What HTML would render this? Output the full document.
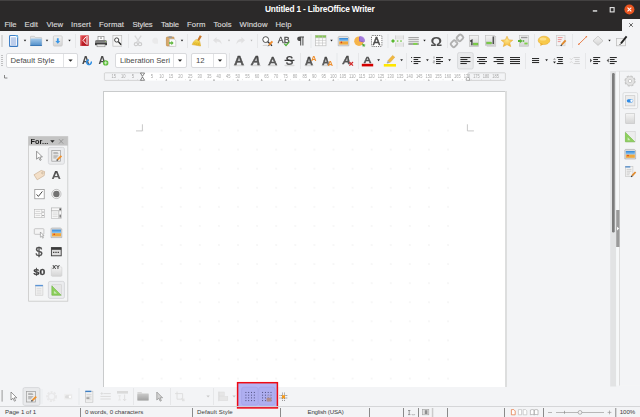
<!DOCTYPE html>
<html><head><meta charset="utf-8">
<style>
html,body{margin:0;padding:0;}
body{width:640px;height:417px;overflow:hidden;background:#f3f4f6;font-family:"Liberation Sans",sans-serif;position:relative;}
.abs{position:absolute;}
.t{position:absolute;white-space:nowrap;line-height:1;}
#dark{left:0;top:0;width:640px;height:30.5px;background:#2b2929;}
#closedoc{left:621.5px;top:18.5px;width:19px;height:13px;background:#f3f4f6;border-top-left-radius:1px;}
.menu{color:#d8d8d8;font-size:7.7px;top:21.4px;-webkit-text-stroke:0.15px #d8d8d8;}
#title{color:#fff;font-weight:bold;font-size:8.3px;letter-spacing:-0.18px;top:5.3px;left:265px;}
.combo{position:absolute;top:53px;height:13px;background:#fff;border:1px solid #d9dadd;border-radius:2px;}
.combo .sep{position:absolute;top:0;bottom:0;width:1px;background:#e2e3e5;}
.ct{color:#4a4a4a;font-size:7.75px;top:57px;}
.st{color:#3c3c3c;font-size:6.1px;top:409.3px;}
#pagesh{left:103.2px;top:91px;width:403.8px;height:295.6px;background:#dddede;}
#pageb{left:103.2px;top:91px;width:401.9px;height:295.6px;background:#c9cbcc;}
#page{left:104px;top:92px;width:401.1px;height:294.6px;background:#fff;}
#grid{left:132.95px;top:121.1px;width:324.7px;height:264.9px;background-image:radial-gradient(circle, #d2d2d2 0.35px, rgba(255,255,255,0) 0.75px);background-size:19.1px 19.08px;}
</style></head>
<body>
<div id="dark" class="abs"></div>
<div id="closedoc" class="abs"></div>
<div id="title" class="t">Untitled 1 - LibreOffice Writer</div>
<div class="t menu" style="left:4.5px;letter-spacing:-0.1px">File</div>
<div class="t menu" style="left:24.5px;letter-spacing:0.075px">Edit</div>
<div class="t menu" style="left:46.5px;letter-spacing:0px">View</div>
<div class="t menu" style="left:71px;letter-spacing:0.13px">Insert</div>
<div class="t menu" style="left:99px;letter-spacing:0.12px">Format</div>
<div class="t menu" style="left:132.5px;letter-spacing:-0.15px">Styles</div>
<div class="t menu" style="left:161px;letter-spacing:-0.07px">Table</div>
<div class="t menu" style="left:187px;letter-spacing:0.125px">Form</div>
<div class="t menu" style="left:213.5px;letter-spacing:0.01px">Tools</div>
<div class="t menu" style="left:239.5px;letter-spacing:0.12px">Window</div>
<div class="t menu" style="left:275.5px;letter-spacing:0.05px">Help</div>

<div class="combo" style="left:6px;width:70px"><div class="sep" style="left:56px"></div></div>
<div class="combo" style="left:115px;width:70px"><div class="sep" style="left:57px"></div></div>
<div class="combo" style="left:191px;width:34px"><div class="sep" style="left:21px"></div></div>
<div class="t ct" style="left:10.5px">Default Style</div>
<div class="t ct" style="left:120px">Liberation Seri</div>
<div class="t ct" style="left:196px">12</div>
<div id="pagesh" class="abs"></div><div id="pageb" class="abs"></div><div id="page" class="abs"></div>
<div id="grid" class="abs"></div>
<div class="t st" style="left:5px">Page 1 of 1</div>
<div class="t st" style="left:85px">0 words, 0 characters</div>
<div class="t st" style="left:197px;letter-spacing:0.1px">Default Style</div>
<div class="t st" style="left:307.5px;letter-spacing:-0.17px">English (USA)</div>
<div class="t st" style="left:619.7px">100%</div>
<svg class="abs" style="left:0;top:0;will-change:transform" width="640" height="417" viewBox="0 0 640 417">
<defs>
<linearGradient id="gPdf" x1="0" y1="0" x2="0.3" y2="1"><stop offset="0" stop-color="#e34a4e"/><stop offset="1" stop-color="#b4141e"/></linearGradient>
<linearGradient id="gFoldG" x1="0" y1="0" x2="0" y2="1"><stop offset="0" stop-color="#c8c8c8"/><stop offset="1" stop-color="#a0a0a0"/></linearGradient>
<radialGradient id="gStar" cx="0.5" cy="0.4" r="0.6"><stop offset="0" stop-color="#fde58c"/><stop offset="1" stop-color="#f4b530"/></radialGradient>
<linearGradient id="gA" x1="0" y1="0" x2="0" y2="1"><stop offset="0" stop-color="#3c3c3c"/><stop offset="1" stop-color="#6a6a6a"/></linearGradient>
<linearGradient id="gDoc" x1="0" y1="0" x2="1" y2="0.3"><stop offset="0" stop-color="#b4d0f0"/><stop offset="0.7" stop-color="#f4f8fd"/><stop offset="1" stop-color="#ffffff"/></linearGradient>
<linearGradient id="gFold" x1="0" y1="0" x2="0" y2="1"><stop offset="0" stop-color="#a3c9ea"/><stop offset="1" stop-color="#4c8bc8"/></linearGradient>
<linearGradient id="gGray" x1="0" y1="0" x2="0" y2="1"><stop offset="0" stop-color="#f4f4f4"/><stop offset="1" stop-color="#d4d4d4"/></linearGradient>
<linearGradient id="gYel" x1="0" y1="0" x2="0" y2="1"><stop offset="0" stop-color="#f8e46a"/><stop offset="1" stop-color="#e6b422"/></linearGradient>
<linearGradient id="gSky" x1="0" y1="0" x2="0" y2="1"><stop offset="0" stop-color="#2f86d8"/><stop offset="1" stop-color="#9fd0f5"/></linearGradient>
</defs>
<rect x="0" y="0" width="640" height="0.8" fill="#4a4848"/>
<rect x="592.8" y="10.2" width="4.4" height="1.5" fill="#dadada"/>
<rect x="610.2" y="7.6" width="3.9" height="4.3" fill="none" stroke="#e6e6e6" stroke-width="1.1"/>
<circle cx="629.4" cy="9.5" r="5" fill="#e9541f"/>
<path d="M627.5 7.6 L631.3 11.4 M631.3 7.6 L627.5 11.4" stroke="#fff" stroke-width="1.05"/>
<path d="M629.2 23.2 L632.8 26.8 M632.8 23.2 L629.2 26.8" stroke="#555" stroke-width="0.9"/>
<rect x="1.5" y="35.5" width="1" height="1" fill="#8d8d8d"/>
<rect x="1.5" y="37.5" width="1" height="1" fill="#8d8d8d"/>
<rect x="1.5" y="39.5" width="1" height="1" fill="#8d8d8d"/>
<rect x="1.5" y="41.5" width="1" height="1" fill="#8d8d8d"/>
<rect x="1.5" y="43.5" width="1" height="1" fill="#8d8d8d"/>
<rect x="1.5" y="45.5" width="1" height="1" fill="#8d8d8d"/>
<g transform="translate(9,35)" ><rect x="0.55" y="0.55" width="8.1" height="10.8" rx="0.9" fill="#fff" stroke="#3f80c8" stroke-width="1.1"/><rect x="1.8" y="2.3" width="5.4" height="8.1" rx="0.6" fill="#bccdeb"/><path d="M6.2 0.6 H8.2 Q8.7 0.6 8.7 1.1 V3.2 Z" fill="#8fd0f6"/><rect x="0" y="10.9" width="9.2" height="0.7" fill="#2a68b0" opacity="0.6"/></g>
<path d="M23.75 39.75 H26.25 L25 41.45 Z" fill="#1e1e1e"/>
<g transform="translate(30,36)" ><path d="M0.5 0.6 Q0.5 0.3 0.9 0.3 H4.4 L5.4 1.6 H11.3 Q11.7 1.6 11.7 2 V9.6 H0.5 Z" fill="#e6e6e6" stroke="#bcbcbc" stroke-width="0.6"/><rect x="0.4" y="2.6" width="11.4" height="7.3" rx="0.5" fill="url(#gFold)"/><rect x="0.4" y="9.1" width="11.4" height="0.8" fill="#3572b0"/></g>
<path d="M45.75 39.75 H48.25 L47 41.45 Z" fill="#1e1e1e"/>
<g transform="translate(53,35.5)" ><rect x="0.4" y="0.4" width="8.8" height="10.2" rx="1" fill="url(#gGray)" stroke="#c4c4c4" stroke-width="0.7"/><path d="M3.9 2.8 H5.7 V5.6 H7.2 L4.8 8.3 L2.4 5.6 H3.9 Z" fill="#3896e6"/></g>
<path d="M68.25 39.75 H70.75 L69.5 41.45 Z" fill="#1e1e1e"/>
<rect x="75.0" y="34" width="1" height="14" fill="#e6e7e9"/>
<g transform="translate(80,35)" ><rect x="0.3" y="0.3" width="8.4" height="10.6" fill="url(#gPdf)"/><rect x="0.3" y="0.3" width="1.2" height="10.6" fill="#f08a8a" opacity="0.55"/><path d="M7 1 V9.8" fill="none" stroke="#fff" stroke-width="1.1"/><path d="M6 1.8 L3 5.4 L6 8.8" fill="none" stroke="#fff" stroke-width="1"/></g>
<g transform="translate(95,36)" ><rect x="3" y="0.3" width="6" height="4" fill="#fff" stroke="#777" stroke-width="0.6"/><path d="M1.6 4 H10.4 Q12 4 12 6 V9 H0 V6 Q0 4 1.6 4 Z" fill="#7e7e7e"/><rect x="0" y="7" width="12" height="2.2" fill="#3e3e3e"/><rect x="2" y="8.2" width="8" height="2.6" fill="#e8e8e8" stroke="#777" stroke-width="0.5"/><rect x="5" y="1.6" width="2" height="0.9" fill="#7a7a7a"/><circle cx="10.4" cy="5.6" r="0.5" fill="#9fd96a"/></g>
<g transform="translate(112.5,35)" ><rect x="0.4" y="0.4" width="8.8" height="10.8" fill="#f6f6f6" stroke="#bdbdbd" stroke-width="0.7"/><circle cx="4.2" cy="5" r="2.1" fill="#fff" stroke="#333" stroke-width="0.9"/><path d="M5.8 6.6 L8.6 9.8" stroke="#222" stroke-width="1.3"/></g>
<rect x="128.0" y="34" width="1" height="14" fill="#e6e7e9"/>
<g transform="translate(134,35.6)" ><path d="M0.8 0 L5.4 6.8 M7.2 0 L2.6 6.8" stroke="#d9d9da" stroke-width="1.3" fill="none"/><ellipse cx="2" cy="8.6" rx="1.7" ry="1.5" fill="none" stroke="#cdcdce" stroke-width="1.2"/><ellipse cx="6" cy="8.6" rx="1.7" ry="1.5" fill="none" stroke="#cdcdce" stroke-width="1.2"/></g>
<g transform="translate(151.6,37.4)" ><path d="M2.6 0.4 H5 L6.4 1.8 V6.4 H2.6 Q0.6 5.4 0.6 3.4 Q0.6 1.4 2.6 0.4 Z" fill="#e9e9ea" opacity="0.9"/></g>
<g transform="translate(166,36)" ><rect x="0.4" y="1" width="7.6" height="9" rx="0.8" fill="#d8a868" stroke="#b58442" stroke-width="0.6"/><rect x="2.4" y="0.2" width="3.6" height="1.8" rx="0.6" fill="#9a9a9a"/><path d="M3.4 3 H8.2 L9.8 4.6 V10.4 H3.4 Z" fill="#fafafa" stroke="#b9b9b9" stroke-width="0.6"/><path d="M3 6.2 H5.4 V4.8 L7.6 7 L5.4 9.2 V7.8 H3 Z" fill="#5cb63a"/></g>
<path d="M180.75 39.75 H183.25 L182 41.45 Z" fill="#1e1e1e"/>
<rect x="187.0" y="34" width="1" height="14" fill="#e6e7e9"/>
<g transform="translate(192,35)" ><path d="M7.8 0.2 L9.8 1.2 L6.8 6.4 L5 5.4 Z" fill="#c9782a"/><path d="M4.2 4.4 L7.8 6.4 L8.6 11 L0.2 9.6 Q1.2 6.2 4.2 4.4 Z" fill="url(#gYel)" stroke="#d9a520" stroke-width="0.5"/><path d="M2.4 9 L3.6 6.8 M4.4 9.6 L5.2 7.4 M6.4 10 L6.6 8" stroke="#caa21c" stroke-width="0.4"/></g>
<rect x="208.0" y="34" width="1" height="14" fill="#e6e7e9"/>
<g transform="translate(213,37)" ><path d="M0 3.2 L3.6 0 V2 Q8.6 2 8.6 7.6 Q7.4 4.4 3.6 4.4 V6.4 Z" fill="#e1e1e2"/></g>
<path d="M228.0 39.75 H230.0 L229 41.45 Z" fill="#b8b8b8"/>
<g transform="translate(236,37)" ><path d="M9 3.2 L5.4 0 V2 Q0.4 2 0.4 7.6 Q1.6 4.4 5.4 4.4 V6.4 Z" fill="#e1e1e2"/></g>
<path d="M250.5 39.75 H252.5 L251.5 41.45 Z" fill="#b8b8b8"/>
<rect x="257.0" y="34" width="1" height="14" fill="#e6e7e9"/>
<g transform="translate(262,36)" ><ellipse cx="3.6" cy="9.4" rx="3.2" ry="0.6" fill="#d4d4d4"/><circle cx="3.7" cy="3.6" r="2.9" fill="#fff" stroke="#3e3e3e" stroke-width="0.9"/><path d="M5.8 5.8 L10 9.8" stroke="#2a2a2a" stroke-width="1.2"/><path d="M10.4 5.4 L7 9.2" stroke="#ee8a2c" stroke-width="1.8"/><path d="M7 9.2 L6.2 10.2" stroke="#333" stroke-width="1"/></g>
<text x="277.8" y="43.2" font-family="Liberation Sans" font-size="9.4" font-weight="normal" font-style="normal" fill="#4a4a4a" stroke="#4e4e4e" stroke-width="0.3" stroke-linejoin="round" textLength="11.8" lengthAdjust="spacingAndGlyphs">AB</text>
<path d="M284.2 43.6 L286 45.6 L289.2 41.8" fill="none" stroke="#4caf34" stroke-width="1.3"/>
<g transform="translate(297,36.5)" ><path d="M3.2 0 H7 V0.9 H6.4 V9 H5.4 V0.9 H4.2 V9 H3.2 V4.6 Q0.2 4.6 0.2 2.3 Q0.2 0 3.2 0 Z" fill="#4a4a4a"/></g>
<rect x="310.5" y="34" width="1" height="14" fill="#e6e7e9"/>
<g transform="translate(315,35)" ><rect x="0.4" y="0.4" width="10.6" height="10.4" fill="#fdfdfd" stroke="#b5b5b5" stroke-width="0.6"/><rect x="0.4" y="0.4" width="10.6" height="2.4" fill="#86c556"/><path d="M0.4 2.8 H11 M0.4 5.4 H11 M0.4 8 H11 M3.9 0.4 V10.8 M7.5 0.4 V10.8" stroke="#bdbdbd" stroke-width="0.55" fill="none"/></g>
<path d="M330.25 39.75 H332.75 L331.5 41.45 Z" fill="#1e1e1e"/>
<g transform="translate(338,36)" ><path d="M0.8 0.4 H9.4 L10.8 1.4 V9.8 H0.2 V1.2 Z" fill="#e2e2e2" stroke="#9b9b9b" stroke-width="0.5"/><rect x="1.2" y="2" width="8.8" height="3.6" fill="url(#gSky)"/><rect x="1.2" y="5.4" width="8.8" height="3.2" fill="#f0a83c"/><circle cx="3.4" cy="6.4" r="0.8" fill="#d9361e"/></g>
<g transform="translate(354,36)" ><circle cx="5" cy="5.2" r="4.8" fill="#f6b44a"/><path d="M5 5.2 L5 0.4 A4.8 4.8 0 0 1 9.6 6.6 Z" fill="#8d5fc9"/><path d="M5.6 4.6 L6 0 A5 5 0 0 1 11 6 Z" fill="#a47be0" opacity="0.9"/><path d="M8 7.4 L11.8 9 L10.4 9.6 L11.2 11 L9.6 10 L9 11.2 Z" fill="#4aa834"/></g>
<g transform="translate(371,35)" ><rect x="0.5" y="0.5" width="10.4" height="11" rx="1" fill="#fff" stroke="#555" stroke-width="0.8" stroke-dasharray="1.2 1"/></g>
<text x="372.8" y="45" font-family="Liberation Sans" font-size="10.6" font-weight="normal" font-style="normal" fill="#4a4a4a" stroke="#4e4e4e" stroke-width="0.45" stroke-linejoin="round" textLength="7.4" lengthAdjust="spacingAndGlyphs">A</text>
<rect x="387.5" y="34" width="1" height="14" fill="#e6e7e9"/>
<g transform="translate(391,35)" ><rect x="4.3" y="0.4" width="8.4" height="4" fill="#e7e7e7"/><rect x="4.3" y="7.6" width="8.4" height="4.2" fill="#e7e7e7"/><path d="M4.5 0.4 V4.4 M12.5 0.4 V4.4 M4.5 7.6 V11.8 M12.5 7.6 V11.8" stroke="#c6c6c6" stroke-width="0.6"/><path d="M0 6 L2 3.9 L4 6 L2 8 Z" fill="#58b82e"/><rect x="5.8" y="5.3" width="1.6" height="1.5" fill="#7ccc50"/><rect x="9.2" y="5.3" width="1.6" height="1.5" fill="#7ccc50"/></g>
<g transform="translate(408.4,37)" ><rect x="0" y="0" width="10.4" height="8" fill="#ececec"/><rect x="0" y="0" width="10.4" height="1.1" fill="#a4a4a4"/><rect x="0" y="2" width="10.4" height="1" fill="#b0b0b0"/><rect x="0" y="3.9" width="10.4" height="1" fill="#b0b0b0"/><rect x="0" y="5.8" width="10.4" height="2.2" fill="#a6a6a6"/><rect x="4.8" y="6" width="4.2" height="1.8" fill="#7ed348"/></g>
<path d="M423.25 39.75 H425.75 L424.5 41.45 Z" fill="#1e1e1e"/>
<text x="430.6" y="46" font-family="Liberation Sans" font-size="12.4" font-weight="bold" font-style="normal" fill="#4f4f4f"  textLength="11.6" lengthAdjust="spacingAndGlyphs">Ω</text>
<rect x="447.0" y="34" width="1" height="14" fill="#e6e7e9"/>
<g transform="translate(451,35)" ><g transform="rotate(-45 6 5.8)" fill="none" stroke="#b0b0b0" stroke-width="1.9"><rect x="-1.2" y="3.2" width="6" height="5.2" rx="1.6"/><rect x="7.2" y="3.2" width="6" height="5.2" rx="1.6"/><path d="M3.6 5.8 H8.4" stroke="#bdbdbd" stroke-width="1.6"/></g></g>
<g transform="translate(469,35)" ><rect x="0.5" y="0.5" width="9" height="11" fill="url(#gGray)" stroke="#c0c0c0" stroke-width="0.7"/><path d="M1.2 6.4 L2.9 5.2 V10.2" stroke="#3a3a3a" stroke-width="1.3" fill="none"/><rect x="4.2" y="8" width="4.8" height="2.1" fill="#7fd04a" stroke="#5a9a3a" stroke-width="0.3"/></g>
<g transform="translate(485,35)" ><rect x="2" y="1.6" width="8.8" height="9.6" fill="#e4e4e4" stroke="#bdbdbd" stroke-width="0.5"/><rect x="0.4" y="0.4" width="8.8" height="9.8" fill="url(#gGray)" stroke="#bdbdbd" stroke-width="0.6"/><rect x="1.6" y="7" width="5" height="2" fill="#7fd04a" stroke="#5a9a3a" stroke-width="0.3"/><path d="M8.2 1.6 V9" stroke="#222" stroke-width="1.1"/></g>
<g transform="translate(501,36)" ><path d="M6 0.2 L7.7 3.8 L11.8 4.2 L8.7 6.8 L9.7 10.6 L6 8.6 L2.3 10.6 L3.3 6.8 L0.2 4.2 L4.3 3.8 Z" fill="url(#gStar)" stroke="#e3a52a" stroke-width="0.5"/></g>
<g transform="translate(518,35)" ><rect x="1.6" y="0.4" width="9" height="10.8" fill="url(#gGray)" stroke="#bdbdbd" stroke-width="0.6"/><rect x="3" y="1.8" width="6.4" height="1.4" fill="#9a9a9a"/><rect x="6.4" y="7.6" width="3.2" height="1.8" fill="#7fd04a"/><path d="M0 5 H2.2 V3.8 L4.4 6 L2.2 8.2 V7 H0 Z" fill="#55b432"/><rect x="4.6" y="5.2" width="1.6" height="1.6" fill="#55b432"/></g>
<rect x="534.0" y="34" width="1" height="14" fill="#e6e7e9"/>
<g transform="translate(538,36)" ><ellipse cx="6" cy="4.4" rx="5.8" ry="4.2" fill="#f8c94a" stroke="#e2a422" stroke-width="0.5"/><path d="M2.6 7 L2.4 10 L5.4 8.2 Z" fill="#eeb030"/><ellipse cx="5" cy="3" rx="3.4" ry="1.6" fill="#fde59a" opacity="0.8"/></g>
<g transform="translate(556,35)" ><rect x="0.4" y="0.4" width="8.6" height="10.4" fill="#f3f3f3" stroke="#c6c6c6" stroke-width="0.6"/><path d="M1.8 2.6 H6.6 M1.8 4.6 H5.6 M1.8 6.6 H4.6" stroke="#e77c7c" stroke-width="0.8"/><path d="M9.6 5.4 L5.8 9.6" stroke="#e08a2e" stroke-width="1.9"/><path d="M5.8 9.6 L4.8 10.8" stroke="#333" stroke-width="1.2"/></g>
<rect x="572.0" y="34" width="1" height="14" fill="#e6e7e9"/>
<path d="M578.8 44.2 L586.4 36.8" stroke="#e8743a" stroke-width="0.9"/><circle cx="578.8" cy="44.2" r="0.8" fill="#e8743a"/><circle cx="586.4" cy="36.8" r="0.8" fill="#e8743a"/>
<g transform="translate(593,36)" ><path d="M5 0.2 L10 4.8 L5 9.4 L0 4.8 Z" fill="url(#gGray)" stroke="#bcbcbc" stroke-width="0.7"/></g>
<path d="M608.25 39.75 H610.75 L609.5 41.45 Z" fill="#1e1e1e"/>
<g transform="translate(616,36)" ><rect x="0.4" y="2.6" width="9" height="7.2" fill="#f3f3f3" stroke="#b9b9b9" stroke-width="0.7"/><path d="M10.6 0.4 L5 7.4" stroke="#222" stroke-width="1.8"/><path d="M5 7.4 L3.6 9 " stroke="#222" stroke-width="0.8"/></g>
<rect x="1.5" y="55.0" width="1" height="1" fill="#8d8d8d"/>
<rect x="1.5" y="57.0" width="1" height="1" fill="#8d8d8d"/>
<rect x="1.5" y="59.0" width="1" height="1" fill="#8d8d8d"/>
<rect x="1.5" y="61.0" width="1" height="1" fill="#8d8d8d"/>
<rect x="1.5" y="63.0" width="1" height="1" fill="#8d8d8d"/>
<rect x="1.5" y="65.0" width="1" height="1" fill="#8d8d8d"/>
<path d="M68.3 59.4 H72.7 L70.5 61.8 Z" fill="#2a2a2a"/>
<path d="M177.8 59.4 H182.2 L180 61.8 Z" fill="#2a2a2a"/>
<path d="M217.8 59.4 H222.2 L220 61.8 Z" fill="#2a2a2a"/>
<text x="82" y="64.3" font-family="Liberation Sans" font-size="11.6" font-weight="bold" font-style="normal" fill="#4a4a4a"  textLength="7.4" lengthAdjust="spacingAndGlyphs">A</text>
<path d="M91.2 61.6 A2.3 2.3 0 1 1 89 60" fill="none" stroke="#2f8fe4" stroke-width="1.5"/>
<text x="98.4" y="64.3" font-family="Liberation Sans" font-size="11.6" font-weight="bold" font-style="normal" fill="#4a4a4a"  textLength="7.4" lengthAdjust="spacingAndGlyphs">A</text>
<circle cx="105.7" cy="62.9" r="2.7" fill="#5abd38"/><path d="M104.1 62.9 H107.3 M105.7 61.3 V64.5" stroke="#e2f6d8" stroke-width="0.9"/>
<rect x="229.0" y="53" width="1" height="16" fill="#e6e7e9"/>
<ellipse cx="239.0" cy="65.4" rx="5.6" ry="0.9" fill="#cfcfcf" opacity="0.8"/>
<text x="234" y="65" font-family="Liberation Sans" font-size="12.4" font-weight="bold" font-style="normal" fill="url(#gA)" stroke="#4e4e4e" stroke-width="0.35" stroke-linejoin="round" textLength="10" lengthAdjust="spacingAndGlyphs">A</text>
<ellipse cx="256.0" cy="65.4" rx="5.1" ry="0.9" fill="#cfcfcf" opacity="0.8"/>
<text x="251" y="65" font-family="Liberation Sans" font-size="12.4" font-weight="bold" font-style="italic" fill="url(#gA)" stroke="#4e4e4e" stroke-width="0.35" stroke-linejoin="round" textLength="9.4" lengthAdjust="spacingAndGlyphs">A</text>
<ellipse cx="272.5" cy="65.4" rx="5.1" ry="0.9" fill="#cfcfcf" opacity="0.8"/>
<text x="268.4" y="64.6" font-family="Liberation Sans" font-size="11.4" font-weight="normal" font-style="normal" fill="url(#gA)" stroke="#4e4e4e" stroke-width="0.5" stroke-linejoin="round" textLength="8.4" lengthAdjust="spacingAndGlyphs">A</text>
<ellipse cx="289.5" cy="65.4" rx="5.1" ry="0.9" fill="#cfcfcf" opacity="0.8"/>
<text x="285.6" y="65" font-family="Liberation Sans" font-size="12" font-weight="bold" font-style="normal" fill="url(#gA)"  textLength="8" lengthAdjust="spacingAndGlyphs">S</text>
<rect x="284.6" y="59.8" width="9.8" height="1.1" fill="#2e2e2e"/>
<rect x="300.0" y="53" width="1" height="16" fill="#e6e7e9"/>
<ellipse cx="309.0" cy="65.4" rx="4.6" ry="0.9" fill="#cfcfcf" opacity="0.8"/>
<text x="305" y="65" font-family="Liberation Sans" font-size="11" font-weight="bold" font-style="normal" fill="url(#gA)" stroke="#4e4e4e" stroke-width="0.3" stroke-linejoin="round" textLength="8" lengthAdjust="spacingAndGlyphs">A</text>
<text x="311" y="60.6" font-family="Liberation Sans" font-size="7.6" font-weight="bold" font-style="normal" fill="#ee8f2e"  >A</text>
<ellipse cx="326.0" cy="65.4" rx="4.6" ry="0.9" fill="#cfcfcf" opacity="0.8"/>
<text x="322" y="64.6" font-family="Liberation Sans" font-size="11" font-weight="bold" font-style="normal" fill="url(#gA)" stroke="#4e4e4e" stroke-width="0.3" stroke-linejoin="round" textLength="7.6" lengthAdjust="spacingAndGlyphs">A</text>
<text x="327.4" y="66.2" font-family="Liberation Sans" font-size="7.6" font-weight="bold" font-style="normal" fill="#ee8f2e"  >A</text>
<rect x="336.5" y="53" width="1" height="16" fill="#e6e7e9"/>
<text x="342.6" y="64.4" font-family="Liberation Sans" font-size="11" font-weight="bold" font-style="italic" fill="url(#gA)" stroke="#4e4e4e" stroke-width="0.3" stroke-linejoin="round" textLength="8" lengthAdjust="spacingAndGlyphs">A</text>
<path d="M349.4 62 L353 65.6 M353 62 L349.4 65.6" stroke="#d22b2b" stroke-width="1.2"/>
<rect x="358.0" y="53" width="1" height="16" fill="#e6e7e9"/>
<text x="363.4" y="63.2" font-family="Liberation Sans" font-size="9.8" font-weight="bold" font-style="normal" fill="url(#gA)" stroke="#4e4e4e" stroke-width="0.3" stroke-linejoin="round" textLength="8" lengthAdjust="spacingAndGlyphs">A</text>
<rect x="361.8" y="63.8" width="11.4" height="2.6" fill="#d40000"/>
<path d="M377.25 59.349999999999994 H379.95000000000005 L378.6 61.25 Z" fill="#262626"/>
<rect x="383.8" y="64" width="12.2" height="2.6" fill="#ffe600"/>
<g transform="translate(385,55)" ><path d="M7.6 0.4 L9.8 2.2 L5 7.6 L2.8 5.8 Z" fill="#f0b840" stroke="#d89a20" stroke-width="0.4"/><path d="M2.8 5.8 L5 7.6 L2.6 8.4 L1.6 8 Z" fill="#a9a9a9"/></g>
<path d="M400.25 59.349999999999994 H402.95000000000005 L401.6 61.25 Z" fill="#262626"/>
<rect x="406.0" y="53" width="1" height="16" fill="#e6e7e9"/>
<rect x="413.6" y="57" width="7" height="1.05" fill="#2c2c2c"/><rect x="413.6" y="59" width="4.6" height="1.05" fill="#2c2c2c"/><rect x="413.6" y="61" width="7" height="1.05" fill="#2c2c2c"/><rect x="413.6" y="63" width="4.6" height="1.05" fill="#2c2c2c"/><rect x="411" y="57" width="1.1" height="1.05" fill="#444"/><rect x="411" y="61" width="1.1" height="1.05" fill="#444"/>
<path d="M426.04999999999995 59.349999999999994 H428.75 L427.4 61.25 Z" fill="#262626"/>
<rect x="436" y="57" width="7" height="1.05" fill="#2c2c2c"/><rect x="436" y="59" width="4.6" height="1.05" fill="#2c2c2c"/><rect x="436" y="61" width="7" height="1.05" fill="#2c2c2c"/><rect x="436" y="63" width="4.6" height="1.05" fill="#2c2c2c"/>
<rect x="433.6" y="56.4" width="0.8" height="2.2" fill="#8a8a8a"/><path d="M433.2 60.8 H434.6 V61.8 H433.2 V62.9 H434.8" fill="none" stroke="#8a8a8a" stroke-width="0.6"/>
<path d="M448.25 59.349999999999994 H450.95000000000005 L449.6 61.25 Z" fill="#262626"/>
<rect x="457.6" y="52.6" width="15.6" height="16.4" rx="1.6" fill="#e9eaec" stroke="#cfd0d3" stroke-width="0.7"/>
<rect x="460.4" y="57" width="10" height="1.05" fill="#2c2c2c"/><rect x="460.4" y="59" width="7" height="1.05" fill="#2c2c2c"/><rect x="460.4" y="61" width="10" height="1.05" fill="#2c2c2c"/><rect x="460.4" y="63" width="6.4" height="1.05" fill="#2c2c2c"/>
<rect x="477.0" y="57" width="10" height="1.05" fill="#2c2c2c"/><rect x="478.8" y="59" width="6.4" height="1.05" fill="#2c2c2c"/><rect x="477.0" y="61" width="10" height="1.05" fill="#2c2c2c"/><rect x="478.8" y="63" width="6.4" height="1.05" fill="#2c2c2c"/>
<rect x="493.6" y="57" width="10" height="1.05" fill="#2c2c2c"/><rect x="496.6" y="59" width="7" height="1.05" fill="#2c2c2c"/><rect x="493.6" y="61" width="10" height="1.05" fill="#2c2c2c"/><rect x="497.20000000000005" y="63" width="6.4" height="1.05" fill="#2c2c2c"/>
<rect x="510" y="57" width="10" height="1.05" fill="#2c2c2c"/><rect x="510" y="59" width="10" height="1.05" fill="#2c2c2c"/><rect x="510" y="61" width="10" height="1.05" fill="#2c2c2c"/><rect x="510" y="63" width="10" height="1.05" fill="#2c2c2c"/>
<rect x="525.0" y="53" width="1" height="16" fill="#e6e7e9"/>
<rect x="532" y="58" width="7.1" height="1.05" fill="#2c2c2c"/><rect x="532" y="60" width="7.1" height="1.05" fill="#2c2c2c"/><rect x="532" y="62" width="7.1" height="1.05" fill="#2c2c2c"/>
<path d="M545.25 59.349999999999994 H547.95 L546.6 61.25 Z" fill="#262626"/>
<rect x="556.8" y="57" width="6.2" height="1.05" fill="#2c2c2c"/><rect x="558.1" y="59" width="4.6" height="1.05" fill="#2c2c2c"/><rect x="558.1" y="61" width="4.6" height="1.05" fill="#2c2c2c"/><rect x="556.8" y="63" width="6.4" height="1.05" fill="#2c2c2c"/>
<path d="M553.1 59.8 L554.5 58 L555.9 59.8 Z" fill="#9a9a9a"/><path d="M553.1 61.6 L554.5 63.4 L555.9 61.6 Z" fill="#2c2c2c"/>
<rect x="573.6" y="57" width="6.2" height="1.05" fill="#d2d2d3"/><rect x="574.9000000000001" y="59" width="4.6" height="1.05" fill="#d2d2d3"/><rect x="574.9000000000001" y="61" width="4.6" height="1.05" fill="#d2d2d3"/><rect x="573.6" y="63" width="6.4" height="1.05" fill="#d2d2d3"/>
<path d="M569.9000000000001 58.2 L571.3000000000001 59.8 L572.7 58.2 M569.9000000000001 63 L571.3000000000001 61.4 L572.7 63" fill="none" stroke="#d2d2d3" stroke-width="0.7"/>
<rect x="585.0" y="53" width="1" height="16" fill="#e6e7e9"/>
<rect x="593.2" y="57" width="7" height="1.05" fill="#2c2c2c"/><rect x="593.2" y="59" width="4.8" height="1.05" fill="#2c2c2c"/><rect x="593.2" y="61" width="7" height="1.05" fill="#2c2c2c"/><rect x="593.2" y="63" width="4.8" height="1.05" fill="#2c2c2c"/>
<path d="M590 58.6 L592.2 60.5 L590 62.4 Z" fill="#5a5a5a"/>
<rect x="609.8000000000001" y="57" width="7" height="1.05" fill="#2c2c2c"/><rect x="609.8000000000001" y="59" width="4.8" height="1.05" fill="#2c2c2c"/><rect x="609.8000000000001" y="61" width="7" height="1.05" fill="#2c2c2c"/><rect x="609.8000000000001" y="63" width="4.8" height="1.05" fill="#2c2c2c"/>
<path d="M608.8000000000001 58.6 L606.6 60.5 L608.8000000000001 62.4 Z" fill="#5a5a5a"/>
<rect x="142" y="72.6" width="326" height="8" fill="#fff"/>
<rect x="104.4" y="72.8" width="37.8" height="7.6" rx="0.8" fill="#f3f4f6" stroke="#c6c6c6" stroke-width="0.7"/>
<rect x="468" y="72.8" width="37.4" height="7.6" rx="0.8" fill="#f3f4f6" stroke="#c6c6c6" stroke-width="0.7"/>
<text x="111.52" y="78" font-family="Liberation Sans" font-size="5.7" fill="#a8a8a8" textLength="4.5" lengthAdjust="spacingAndGlyphs">15</text>
<text x="121.06" y="78" font-family="Liberation Sans" font-size="5.7" fill="#a8a8a8" textLength="4.5" lengthAdjust="spacingAndGlyphs">10</text>
<text x="131.66" y="78" font-family="Liberation Sans" font-size="5.7" fill="#a8a8a8" textLength="2.4" lengthAdjust="spacingAndGlyphs">5</text>
<text x="150.75" y="78" font-family="Liberation Sans" font-size="5.7" fill="#a8a8a8" textLength="2.4" lengthAdjust="spacingAndGlyphs">5</text>
<text x="159.24" y="78" font-family="Liberation Sans" font-size="5.7" fill="#a8a8a8" textLength="4.5" lengthAdjust="spacingAndGlyphs">10</text>
<text x="168.78" y="78" font-family="Liberation Sans" font-size="5.7" fill="#a8a8a8" textLength="4.5" lengthAdjust="spacingAndGlyphs">15</text>
<text x="178.33" y="78" font-family="Liberation Sans" font-size="5.7" fill="#a8a8a8" textLength="4.5" lengthAdjust="spacingAndGlyphs">20</text>
<text x="187.88" y="78" font-family="Liberation Sans" font-size="5.7" fill="#a8a8a8" textLength="4.5" lengthAdjust="spacingAndGlyphs">25</text>
<text x="197.42" y="78" font-family="Liberation Sans" font-size="5.7" fill="#a8a8a8" textLength="4.5" lengthAdjust="spacingAndGlyphs">30</text>
<text x="206.97" y="78" font-family="Liberation Sans" font-size="5.7" fill="#a8a8a8" textLength="4.5" lengthAdjust="spacingAndGlyphs">35</text>
<text x="216.51" y="78" font-family="Liberation Sans" font-size="5.7" fill="#a8a8a8" textLength="4.5" lengthAdjust="spacingAndGlyphs">40</text>
<text x="226.06" y="78" font-family="Liberation Sans" font-size="5.7" fill="#a8a8a8" textLength="4.5" lengthAdjust="spacingAndGlyphs">45</text>
<text x="235.60" y="78" font-family="Liberation Sans" font-size="5.7" fill="#a8a8a8" textLength="4.5" lengthAdjust="spacingAndGlyphs">50</text>
<text x="245.15" y="78" font-family="Liberation Sans" font-size="5.7" fill="#a8a8a8" textLength="4.5" lengthAdjust="spacingAndGlyphs">55</text>
<text x="254.69" y="78" font-family="Liberation Sans" font-size="5.7" fill="#a8a8a8" textLength="4.5" lengthAdjust="spacingAndGlyphs">60</text>
<text x="264.24" y="78" font-family="Liberation Sans" font-size="5.7" fill="#a8a8a8" textLength="4.5" lengthAdjust="spacingAndGlyphs">65</text>
<text x="273.78" y="78" font-family="Liberation Sans" font-size="5.7" fill="#a8a8a8" textLength="4.5" lengthAdjust="spacingAndGlyphs">70</text>
<text x="283.33" y="78" font-family="Liberation Sans" font-size="5.7" fill="#a8a8a8" textLength="4.5" lengthAdjust="spacingAndGlyphs">75</text>
<text x="292.87" y="78" font-family="Liberation Sans" font-size="5.7" fill="#a8a8a8" textLength="4.5" lengthAdjust="spacingAndGlyphs">80</text>
<text x="302.42" y="78" font-family="Liberation Sans" font-size="5.7" fill="#a8a8a8" textLength="4.5" lengthAdjust="spacingAndGlyphs">85</text>
<text x="311.96" y="78" font-family="Liberation Sans" font-size="5.7" fill="#a8a8a8" textLength="4.5" lengthAdjust="spacingAndGlyphs">90</text>
<text x="321.50" y="78" font-family="Liberation Sans" font-size="5.7" fill="#a8a8a8" textLength="4.5" lengthAdjust="spacingAndGlyphs">95</text>
<text x="330.00" y="78" font-family="Liberation Sans" font-size="5.7" fill="#a8a8a8" textLength="6.6" lengthAdjust="spacingAndGlyphs">100</text>
<text x="339.55" y="78" font-family="Liberation Sans" font-size="5.7" fill="#a8a8a8" textLength="6.6" lengthAdjust="spacingAndGlyphs">105</text>
<text x="349.09" y="78" font-family="Liberation Sans" font-size="5.7" fill="#a8a8a8" textLength="6.6" lengthAdjust="spacingAndGlyphs">110</text>
<text x="358.63" y="78" font-family="Liberation Sans" font-size="5.7" fill="#a8a8a8" textLength="6.6" lengthAdjust="spacingAndGlyphs">115</text>
<text x="368.18" y="78" font-family="Liberation Sans" font-size="5.7" fill="#a8a8a8" textLength="6.6" lengthAdjust="spacingAndGlyphs">120</text>
<text x="377.72" y="78" font-family="Liberation Sans" font-size="5.7" fill="#a8a8a8" textLength="6.6" lengthAdjust="spacingAndGlyphs">125</text>
<text x="387.27" y="78" font-family="Liberation Sans" font-size="5.7" fill="#a8a8a8" textLength="6.6" lengthAdjust="spacingAndGlyphs">130</text>
<text x="396.81" y="78" font-family="Liberation Sans" font-size="5.7" fill="#a8a8a8" textLength="6.6" lengthAdjust="spacingAndGlyphs">135</text>
<text x="406.36" y="78" font-family="Liberation Sans" font-size="5.7" fill="#a8a8a8" textLength="6.6" lengthAdjust="spacingAndGlyphs">140</text>
<text x="415.91" y="78" font-family="Liberation Sans" font-size="5.7" fill="#a8a8a8" textLength="6.6" lengthAdjust="spacingAndGlyphs">145</text>
<text x="425.45" y="78" font-family="Liberation Sans" font-size="5.7" fill="#a8a8a8" textLength="6.6" lengthAdjust="spacingAndGlyphs">150</text>
<text x="434.99" y="78" font-family="Liberation Sans" font-size="5.7" fill="#a8a8a8" textLength="6.6" lengthAdjust="spacingAndGlyphs">155</text>
<text x="444.54" y="78" font-family="Liberation Sans" font-size="5.7" fill="#a8a8a8" textLength="6.6" lengthAdjust="spacingAndGlyphs">160</text>
<text x="454.08" y="78" font-family="Liberation Sans" font-size="5.7" fill="#a8a8a8" textLength="6.6" lengthAdjust="spacingAndGlyphs">165</text>
<text x="463.63" y="78" font-family="Liberation Sans" font-size="5.7" fill="#a8a8a8" textLength="6.6" lengthAdjust="spacingAndGlyphs">170</text>
<text x="473.18" y="78" font-family="Liberation Sans" font-size="5.7" fill="#a8a8a8" textLength="6.6" lengthAdjust="spacingAndGlyphs">175</text>
<text x="482.72" y="78" font-family="Liberation Sans" font-size="5.7" fill="#a8a8a8" textLength="6.6" lengthAdjust="spacingAndGlyphs">180</text>
<text x="492.27" y="78" font-family="Liberation Sans" font-size="5.7" fill="#a8a8a8" textLength="6.6" lengthAdjust="spacingAndGlyphs">185</text>
<rect x="118.24" y="79.4" width="0.6" height="0.7" fill="#c4c4c4"/><rect x="127.78" y="79.4" width="0.6" height="0.7" fill="#c4c4c4"/><rect x="137.33" y="79.4" width="0.6" height="0.7" fill="#c4c4c4"/><rect x="156.42" y="79.4" width="0.6" height="0.7" fill="#c4c4c4"/><rect x="165.96" y="79.4" width="0.6" height="0.7" fill="#c4c4c4"/><rect x="175.51" y="79.4" width="0.6" height="0.7" fill="#c4c4c4"/><rect x="185.05" y="79.4" width="0.6" height="0.7" fill="#c4c4c4"/><rect x="194.60" y="79.4" width="0.6" height="0.7" fill="#c4c4c4"/><rect x="204.14" y="79.4" width="0.6" height="0.7" fill="#c4c4c4"/><rect x="213.69" y="79.4" width="0.6" height="0.7" fill="#c4c4c4"/><rect x="223.23" y="79.4" width="0.6" height="0.7" fill="#c4c4c4"/><rect x="232.78" y="79.4" width="0.6" height="0.7" fill="#c4c4c4"/><rect x="242.32" y="79.4" width="0.6" height="0.7" fill="#c4c4c4"/><rect x="251.87" y="79.4" width="0.6" height="0.7" fill="#c4c4c4"/><rect x="261.41" y="79.4" width="0.6" height="0.7" fill="#c4c4c4"/><rect x="270.96" y="79.4" width="0.6" height="0.7" fill="#c4c4c4"/><rect x="280.50" y="79.4" width="0.6" height="0.7" fill="#c4c4c4"/><rect x="290.05" y="79.4" width="0.6" height="0.7" fill="#c4c4c4"/><rect x="299.59" y="79.4" width="0.6" height="0.7" fill="#c4c4c4"/><rect x="309.14" y="79.4" width="0.6" height="0.7" fill="#c4c4c4"/><rect x="318.68" y="79.4" width="0.6" height="0.7" fill="#c4c4c4"/><rect x="328.23" y="79.4" width="0.6" height="0.7" fill="#c4c4c4"/><rect x="337.77" y="79.4" width="0.6" height="0.7" fill="#c4c4c4"/><rect x="347.32" y="79.4" width="0.6" height="0.7" fill="#c4c4c4"/><rect x="356.86" y="79.4" width="0.6" height="0.7" fill="#c4c4c4"/><rect x="366.41" y="79.4" width="0.6" height="0.7" fill="#c4c4c4"/><rect x="375.95" y="79.4" width="0.6" height="0.7" fill="#c4c4c4"/><rect x="385.50" y="79.4" width="0.6" height="0.7" fill="#c4c4c4"/><rect x="395.04" y="79.4" width="0.6" height="0.7" fill="#c4c4c4"/><rect x="404.59" y="79.4" width="0.6" height="0.7" fill="#c4c4c4"/><rect x="414.13" y="79.4" width="0.6" height="0.7" fill="#c4c4c4"/><rect x="423.68" y="79.4" width="0.6" height="0.7" fill="#c4c4c4"/><rect x="433.22" y="79.4" width="0.6" height="0.7" fill="#c4c4c4"/><rect x="442.77" y="79.4" width="0.6" height="0.7" fill="#c4c4c4"/><rect x="452.31" y="79.4" width="0.6" height="0.7" fill="#c4c4c4"/><rect x="461.86" y="79.4" width="0.6" height="0.7" fill="#c4c4c4"/><rect x="471.40" y="79.4" width="0.6" height="0.7" fill="#c4c4c4"/><rect x="480.95" y="79.4" width="0.6" height="0.7" fill="#c4c4c4"/><rect x="490.49" y="79.4" width="0.6" height="0.7" fill="#c4c4c4"/><rect x="500.04" y="79.4" width="0.6" height="0.7" fill="#c4c4c4"/>
<path d="M165.26 80.6 L166.26 79.2 L167.26 80.6 Z" fill="#7a7a7a"/><path d="M189.12 80.6 L190.12 79.2 L191.12 80.6 Z" fill="#7a7a7a"/><path d="M212.99 80.6 L213.99 79.2 L214.99 80.6 Z" fill="#7a7a7a"/><path d="M236.85 80.6 L237.85 79.2 L238.85 80.6 Z" fill="#7a7a7a"/><path d="M260.71 80.6 L261.71 79.2 L262.71 80.6 Z" fill="#7a7a7a"/><path d="M284.58 80.6 L285.58 79.2 L286.58 80.6 Z" fill="#7a7a7a"/><path d="M308.44 80.6 L309.44 79.2 L310.44 80.6 Z" fill="#7a7a7a"/><path d="M332.30 80.6 L333.30 79.2 L334.30 80.6 Z" fill="#7a7a7a"/><path d="M356.16 80.6 L357.16 79.2 L358.16 80.6 Z" fill="#7a7a7a"/><path d="M380.02 80.6 L381.02 79.2 L382.02 80.6 Z" fill="#7a7a7a"/><path d="M403.89 80.6 L404.89 79.2 L405.89 80.6 Z" fill="#7a7a7a"/><path d="M427.75 80.6 L428.75 79.2 L429.75 80.6 Z" fill="#7a7a7a"/><path d="M451.61 80.6 L452.61 79.2 L453.61 80.6 Z" fill="#7a7a7a"/>
<path d="M140.4 73 H144.6 L142.5 76.3 Z M140.4 80.3 H144.6 L142.5 77 Z" fill="#fff" stroke="#555" stroke-width="0.7"/>
<path d="M466.2 80.3 H469.6 V78.6 L467.9 77 L466.2 78.6 Z" fill="#fff" stroke="#777" stroke-width="0.6"/>
<path d="M4.5 75 V78 H7.4" fill="none" stroke="#6a6a6a" stroke-width="0.8"/>
<path d="M136 130.9 H142.4 V124.3" fill="none" stroke="#c2c2c2" stroke-width="0.9"/>
<path d="M473.9 130.9 H467.4 V124.3" fill="none" stroke="#c2c2c2" stroke-width="0.9"/>
<rect x="610.2" y="71" width="6" height="315.5" fill="#e2e3e4"/>
<rect x="612" y="73" width="2.7" height="159.5" rx="1.2" fill="#7c7c7c"/>
<rect x="616.2" y="71" width="24" height="314.5" fill="#f7f8f9"/>
<rect x="619" y="71" width="0.8" height="314.5" fill="#cfcfcf"/>
<rect x="616.2" y="210" width="3.5" height="37" fill="#9a9a9a"/>
<path d="M617 226.8 L619.2 228.6 L617 230.4 Z" fill="#fff"/>
<rect x="619.8" y="71" width="20.2" height="314.5" fill="#f3f4f6"/>
<rect x="616.2" y="70.8" width="23.8" height="0.7" fill="#dcdddf"/>
<g transform="translate(624,75)" ><circle cx="6" cy="6" r="5" fill="none" stroke="#c4c4c4" stroke-width="1.2" stroke-dasharray="2.3 1.6"/><circle cx="6" cy="6" r="4.5" fill="#e3e3e3" stroke="#bdbdbd" stroke-width="0.6"/><circle cx="6" cy="6" r="1.7" fill="#fff" stroke="#b4b4b4" stroke-width="0.6"/></g>
<rect x="623" y="92.6" width="14.6" height="16" rx="1.4" fill="#f5f6f7" stroke="#d3d4d6" stroke-width="0.7"/>
<g transform="translate(625,95.4)" ><rect x="0.3" y="0.3" width="9.6" height="10.2" fill="#ececec" stroke="#c4c4c4" stroke-width="0.6"/><rect x="1.8" y="3.8" width="6.4" height="3.2" rx="1.6" fill="#2f8be6"/><circle cx="6.6" cy="5.4" r="1.3" fill="#fff"/></g>
<g transform="translate(625.4,113.4)" ><rect x="0.3" y="0.3" width="9" height="9.8" fill="url(#gGray)" stroke="#c4c4c4" stroke-width="0.6"/></g>
<g transform="translate(625,131)" ><rect x="0.8" y="0.3" width="9.4" height="10.6" fill="#ededed" stroke="#cfcfcf" stroke-width="0.6"/><path d="M0.4 1.4 L9.8 10.8 H0.4 Z" fill="#8ed15c" stroke="#66b03a" stroke-width="0.5"/><path d="M2.4 5.8 L6 9.4 H2.4 Z" fill="#d4f0c0" stroke="#6cb640" stroke-width="0.3"/></g>
<g transform="translate(624.6,149)" ><path d="M0.8 0.4 H9.6 L11 1.4 V10 H0.2 V1.2 Z" fill="#dcdcdc" stroke="#9b9b9b" stroke-width="0.5"/><rect x="1.2" y="2" width="9" height="3.8" fill="url(#gSky)"/><rect x="1.2" y="5.6" width="9" height="3.2" fill="#f0a83c"/><circle cx="3.4" cy="6.6" r="0.8" fill="#d9361e"/></g>
<g transform="translate(625,166)" ><rect x="0.3" y="0.6" width="7.6" height="10" fill="#f3f3f3" stroke="#c2c2c2" stroke-width="0.6"/><rect x="0.3" y="0.3" width="5" height="1.2" fill="#3d7fc6"/><path d="M1.6 3.4 H6.4 M1.6 5.2 H6.4 M1.6 7 H5 M1.6 8.8 H4.4" stroke="#b4b4b4" stroke-width="0.6"/><path d="M10.6 6 L7.2 9.6" stroke="#e08a2e" stroke-width="1.8"/><path d="M7.2 9.6 L6.2 10.8" stroke="#333" stroke-width="1.1"/></g>
<rect x="28.6" y="136.6" width="39.2" height="164.6" fill="#f4f5f6" stroke="#c9c9c9" stroke-width="0.8"/>
<rect x="28.4" y="136.6" width="39.4" height="9" fill="#c3c3c3"/>
<text x="30.6" y="144.2" font-family="Liberation Sans" font-size="7.4" font-weight="bold" font-style="normal" fill="#1e1e1e"  >For...</text>
<path d="M50.2 140.2 H54.6 L52.4 142.8 Z" fill="#222"/>
<path d="M59 139.2 L63.2 143.6 M63.2 139.2 L59 143.6" stroke="#8a8a8a" stroke-width="0.8"/>
<g transform="translate(36.2,150.8)" ><path d="M0.4 0.4 V8.4 L2.4 6.6 L3.8 9.6 L5 9 L3.6 6.2 H6.2 Z" fill="#fff" stroke="#6e6e6e" stroke-width="0.7"/></g>
<rect x="48.4" y="147.4" width="16" height="16.8" rx="1.6" fill="#ebecee" stroke="#cfd0d3" stroke-width="0.7"/>
<g transform="translate(51.4,150.2)" ><rect x="0.4" y="0.4" width="8.8" height="10.6" fill="#ececec" stroke="#9c9c9c" stroke-width="0.7"/><path d="M2 2.4 H6.4 M2 3.5 H7 M2 5.6 H7 M2 6.7 H6 M2 7.8 H5" stroke="#8a8a8a" stroke-width="0.6"/><path d="M10 5.6 L6.2 9.4" stroke="#f0922e" stroke-width="1.9"/><path d="M6.2 9.4 L5.3 10.3" stroke="#222" stroke-width="1.3"/></g>
<g transform="translate(33.6,169.4)" ><path d="M0.4 5.4 L7.6 1 L11 2.2 L10.6 6.2 L3.6 10.4 Z" fill="#f3dfc8" stroke="#c4a888" stroke-width="0.6"/><circle cx="8.8" cy="3.6" r="0.8" fill="#fff" stroke="#9a7a50" stroke-width="0.4"/></g>
<text x="51.4" y="178.6" font-family="Liberation Sans" font-size="11.6" font-weight="bold" font-style="normal" fill="url(#gA)"  textLength="9.4" lengthAdjust="spacingAndGlyphs">A</text>
<g transform="translate(34.4,189)" ><rect x="0.4" y="0.4" width="9.4" height="9.4" fill="#fff" stroke="#8a8a8a" stroke-width="0.7"/><path d="M2.2 5.4 L4 7.4 L8 2.4" fill="none" stroke="#333" stroke-width="0.9"/></g>
<g transform="translate(51.4,189)" ><circle cx="5" cy="5" r="4.6" fill="#fafafa" stroke="#a8a8a8" stroke-width="0.7"/><circle cx="5" cy="5" r="3.2" fill="#727272"/></g>
<g transform="translate(34.2,209)" ><rect x="0.3" y="0.3" width="10" height="8.4" fill="#f8f8f8" stroke="#b8b8b8" stroke-width="0.6"/><path d="M7.4 0.3 V8.7 M0.3 4.5 H7.4" stroke="#b8b8b8" stroke-width="0.5"/><path d="M1.4 2.4 H6 M1.4 6.4 H6" stroke="#c8c8c8" stroke-width="0.7"/><circle cx="8.8" cy="3" r="0.5" fill="#333"/><circle cx="8.8" cy="6.4" r="0.5" fill="#333"/></g>
<g transform="translate(51.2,207.6)" ><rect x="0.3" y="0.3" width="10" height="3" fill="#f8f8f8" stroke="#a8a8a8" stroke-width="0.6"/><rect x="0.3" y="3.3" width="7.4" height="7.4" fill="#f8f8f8" stroke="#b8b8b8" stroke-width="0.6"/><path d="M1.4 5.4 H6.4 M1.4 7.2 H6.4 M1.4 9 H6.4" stroke="#c8c8c8" stroke-width="0.6"/><rect x="7.7" y="3.3" width="2.6" height="7.4" fill="#f8f8f8" stroke="#b8b8b8" stroke-width="0.6"/><rect x="8.2" y="0.8" width="1.6" height="1.8" fill="#555"/><rect x="8.3" y="7" width="1.4" height="3" fill="#777"/></g>
<g transform="translate(34,228.4)" ><rect x="0.3" y="0.3" width="9.6" height="5.6" rx="0.8" fill="#f4f4f4" stroke="#a9a9a9" stroke-width="0.6"/><path d="M6.4 3.6 V8.8 L7.6 7.8 L8.6 9.8 L9.4 9.4 L8.4 7.4 H10 Z" fill="#fff" stroke="#777" stroke-width="0.5"/></g>
<g transform="translate(50.8,227.6)" ><path d="M0.8 0.4 H9.6 L11 1.4 V10 H0.2 V1.2 Z" fill="#dcdcdc" stroke="#9b9b9b" stroke-width="0.5"/><rect x="1.2" y="2" width="9" height="3.8" fill="url(#gSky)"/><rect x="1.2" y="5.6" width="9" height="3.2" fill="#f0a83c"/><circle cx="3.4" cy="6.6" r="0.8" fill="#d9361e"/></g>
<text x="35.6" y="256.2" font-family="Liberation Sans" font-size="12.4" font-weight="normal" font-style="normal" fill="#4a4a4a" stroke="#4e4e4e" stroke-width="0.35" stroke-linejoin="round" >$</text>
<g transform="translate(51,247.2)" ><rect x="0.4" y="0.4" width="9.8" height="8.2" fill="#dedede" stroke="#3a3a3a" stroke-width="0.9"/><rect x="0.4" y="0.4" width="9.8" height="2.2" fill="#3a3a3a"/><path d="M2 5.2 H8.6" stroke="#444" stroke-width="1.3" stroke-dasharray="1.4 0.9"/></g>
<text x="33.6" y="274.6" font-family="Liberation Sans" font-size="9.8" font-weight="bold" font-style="normal" fill="#3a3a3a" stroke="#4e4e4e" stroke-width="0.35" stroke-linejoin="round" textLength="11.6" lengthAdjust="spacingAndGlyphs">$0</text>
<g transform="translate(51,266.6)" ><rect x="0.3" y="0.3" width="10.6" height="9.4" rx="1" fill="url(#gGray)" stroke="#cdcdcd" stroke-width="0.6"/></g>
<text x="52.2" y="269" font-family="Liberation Sans" font-size="5.4" font-weight="bold" font-style="normal" fill="#333"  textLength="7.8" lengthAdjust="spacingAndGlyphs">XY</text>
<g transform="translate(35,284.6)" ><rect x="0.3" y="0.6" width="7.6" height="10" fill="#f3f3f3" stroke="#c8c8c8" stroke-width="0.6"/><rect x="0.3" y="0.3" width="7.6" height="1.4" fill="#5a94d6"/><path d="M1.6 3.8 H6.4 M1.6 5.6 H6.4 M1.6 7.4 H6.4 M1.6 9.2 H6.4" stroke="#cdcdcd" stroke-width="0.6"/></g>
<rect x="48.4" y="281.4" width="16" height="17" rx="1.6" fill="#ebecee" stroke="#cfd0d3" stroke-width="0.7"/>
<g transform="translate(51.4,284.4)" ><rect x="0.8" y="0.3" width="9.4" height="10.6" fill="#e6e6e6" stroke="#cfcfcf" stroke-width="0.6"/><path d="M0.4 1.4 L9.8 10.8 H0.4 Z" fill="#8ed15c" stroke="#66b03a" stroke-width="0.5"/><path d="M2.4 5.8 L6 9.4 H2.4 Z" fill="#d4f0c0" stroke="#6cb640" stroke-width="0.3"/></g>
<rect x="1.6" y="390" width="1" height="11.6" fill="#9a9a9a"/>
<g transform="translate(10.6,391.6)" ><path d="M0.4 0.4 V8.4 L2.4 6.6 L3.8 9.6 L5 9 L3.6 6.2 H6.2 Z" fill="#fff" stroke="#6e6e6e" stroke-width="0.7"/></g>
<rect x="23" y="387.6" width="17" height="17.8" rx="1.8" fill="#e9eaec" stroke="#cfd0d3" stroke-width="0.7"/>
<g transform="translate(26.2,391)" ><rect x="0.4" y="0.4" width="8.8" height="10.6" fill="#ececec" stroke="#9c9c9c" stroke-width="0.7"/><path d="M2 2.4 H6.4 M2 3.5 H7 M2 5.6 H7 M2 6.7 H6 M2 7.8 H5" stroke="#8a8a8a" stroke-width="0.6"/><path d="M10 5.6 L6.2 9.4" stroke="#f0922e" stroke-width="1.9"/><path d="M6.2 9.4 L5.3 10.3" stroke="#222" stroke-width="1.3"/></g>
<rect x="41.5" y="389" width="1" height="15" fill="#eaebed"/>
<g transform="translate(46,391)" ><circle cx="5.6" cy="5.6" r="4.4" fill="none" stroke="#e8e8e9" stroke-width="2" stroke-dasharray="2 1.2"/><circle cx="5.6" cy="5.6" r="3.2" fill="none" stroke="#e9e9ea" stroke-width="1.4"/></g>
<g transform="translate(64,393.6)" ><rect x="0.3" y="0.3" width="8" height="5.6" fill="#ededed"/><rect x="1" y="1.6" width="6.6" height="3" rx="1.5" fill="#dcdcdc"/><circle cx="6" cy="3.1" r="1.3" fill="#fff"/></g>
<rect x="78.5" y="388" width="1" height="17" fill="#e6e7e9"/>
<g transform="translate(85,390.4)" ><rect x="0.3" y="0.8" width="7.6" height="11" fill="#f3f3f3" stroke="#bdbdbd" stroke-width="0.6"/><rect x="0.3" y="0.3" width="6" height="1.4" fill="#3d7fc6"/><path d="M1.4 4 H6.6 M1.4 5.8 H6.6 M1.4 7.6 H6.6 M1.4 9.4 H6.6" stroke="#c4c4c4" stroke-width="0.6"/><rect x="1.4" y="7.2" width="3" height="0.9" fill="#666"/></g>
<g transform="translate(100.4,392)" ><path d="M3 1.6 H10.4 M0 4.4 H10.4 M0 7 H10.4" stroke="#dcdcdc" stroke-width="1"/><path d="M1.4 0 V3 M0 1.5 H2.8" stroke="#d8d8d8" stroke-width="0.7"/></g>
<g transform="translate(117,391)" ><rect x="0" y="0" width="11" height="2.6" fill="#dadada"/><path d="M2.6 4.4 V9 M1.2 4.8 H4 M1.2 9 H4 " stroke="#e2e2e2" stroke-width="0.7"/><path d="M7.6 3.6 V9.4 M6 8 L7.6 9.8 L9.2 8" stroke="#dadada" stroke-width="0.8" fill="none"/></g>
<rect x="133.0" y="388" width="1" height="17" fill="#e6e7e9"/>
<g transform="translate(137,391.2)" ><path d="M0.4 0.8 H4.4 L5.4 2 H11.6 V9.4 H0.4 Z" fill="#d6d6d6"/><rect x="0.4" y="2.8" width="11.2" height="6.6" rx="0.6" fill="url(#gFoldG)"/></g>
<g transform="translate(156.4,391.6)" ><path d="M0.4 0.4 V8.4 L2.4 6.6 L3.8 9.6 L5 9 L3.6 6.2 H6.2 Z" fill="#d2d2d2" stroke="#8e8e8e" stroke-width="0.7"/></g>
<rect x="170.0" y="388" width="1" height="17" fill="#e6e7e9"/>
<g transform="translate(175,391.6)" ><path d="M2 0 V7.6 H9.6 M0 2 H7.6 V9.6" fill="none" stroke="#dcdcdc" stroke-width="0.9"/><path d="M6.4 6.6 L9.4 9.4" stroke="#e0e0e0" stroke-width="1.2"/></g>
<path d="M206.4 395.4 H209.8 L208.1 397.4 Z" fill="#c8c8c8"/>
<rect x="213.0" y="388" width="1" height="17" fill="#e6e7e9"/>
<g transform="translate(218,391.6)" ><rect x="0.3" y="0" width="0.9" height="9.6" fill="#d8d8d8"/><rect x="1.2" y="0.4" width="5" height="4" fill="#e6e6e6" stroke="#dadada" stroke-width="0.5"/><rect x="1.2" y="5" width="8.6" height="4" fill="#e6e6e6" stroke="#dadada" stroke-width="0.5"/></g>
<path d="M232.4 395.4 H235.8 L234.1 397.4 Z" fill="#c8c8c8"/>
<rect x="237.6" y="382.7" width="39.8" height="25.2" fill="#b4b4f4" stroke="#ee0a14" stroke-width="1.5"/>
<rect x="241.6" y="387.2" width="16.4" height="17.8" rx="2.2" fill="#aeaef0" stroke="#a3a3e6" stroke-width="0.7"/>
<rect x="258.6" y="387.2" width="16.4" height="17.8" rx="2.2" fill="#aeaef0" stroke="#a3a3e6" stroke-width="0.7"/>
<rect x="245.45" y="391.95" width="0.9" height="0.9" fill="#3b3b66"/><rect x="245.45" y="394.70" width="0.9" height="0.9" fill="#3b3b66"/><rect x="245.45" y="397.45" width="0.9" height="0.9" fill="#3b3b66"/><rect x="245.45" y="400.20" width="0.9" height="0.9" fill="#3b3b66"/><rect x="248.25" y="391.95" width="0.9" height="0.9" fill="#3b3b66"/><rect x="248.25" y="394.70" width="0.9" height="0.9" fill="#3b3b66"/><rect x="248.25" y="397.45" width="0.9" height="0.9" fill="#3b3b66"/><rect x="248.25" y="400.20" width="0.9" height="0.9" fill="#3b3b66"/><rect x="251.05" y="391.95" width="0.9" height="0.9" fill="#3b3b66"/><rect x="251.05" y="394.70" width="0.9" height="0.9" fill="#3b3b66"/><rect x="251.05" y="397.45" width="0.9" height="0.9" fill="#3b3b66"/><rect x="251.05" y="400.20" width="0.9" height="0.9" fill="#3b3b66"/><rect x="253.85" y="391.95" width="0.9" height="0.9" fill="#3b3b66"/><rect x="253.85" y="394.70" width="0.9" height="0.9" fill="#3b3b66"/><rect x="253.85" y="397.45" width="0.9" height="0.9" fill="#3b3b66"/><rect x="253.85" y="400.20" width="0.9" height="0.9" fill="#3b3b66"/>
<rect x="262.15" y="391.95" width="0.9" height="0.9" fill="#3b3b66"/><rect x="262.15" y="394.70" width="0.9" height="0.9" fill="#3b3b66"/><rect x="262.15" y="397.45" width="0.9" height="0.9" fill="#3b3b66"/><rect x="262.15" y="400.20" width="0.9" height="0.9" fill="#3b3b66"/><rect x="264.95" y="391.95" width="0.9" height="0.9" fill="#3b3b66"/><rect x="264.95" y="394.70" width="0.9" height="0.9" fill="#3b3b66"/><rect x="264.95" y="397.45" width="0.9" height="0.9" fill="#3b3b66"/><rect x="264.95" y="400.20" width="0.9" height="0.9" fill="#3b3b66"/><rect x="267.75" y="391.95" width="0.9" height="0.9" fill="#3b3b66"/><rect x="267.75" y="394.70" width="0.9" height="0.9" fill="#3b3b66"/><rect x="267.75" y="397.45" width="0.9" height="0.9" fill="#3b3b66"/><rect x="267.75" y="400.20" width="0.9" height="0.9" fill="#3b3b66"/><rect x="270.55" y="391.95" width="0.9" height="0.9" fill="#3b3b66"/><rect x="270.55" y="394.70" width="0.9" height="0.9" fill="#3b3b66"/><rect x="270.55" y="397.45" width="0.9" height="0.9" fill="#3b3b66"/><rect x="270.55" y="400.20" width="0.9" height="0.9" fill="#3b3b66"/>
<rect x="266.6" y="397.8" width="4.8" height="3.8" rx="0.5" fill="#b08c8c"/><path d="M267.6 397.8 V396.6 A1.4 1.4 0 0 1 270.4 396.6 V397.8" fill="none" stroke="#a9a2c8" stroke-width="0.8"/>
<rect x="279.60" y="395.0" width="0.8" height="0.8" fill="#555"/><rect x="279.60" y="397.6" width="0.8" height="0.8" fill="#555"/><rect x="281.30" y="395.0" width="0.8" height="0.8" fill="#555"/><rect x="281.30" y="397.6" width="0.8" height="0.8" fill="#555"/><rect x="284.70" y="395.0" width="0.8" height="0.8" fill="#555"/><rect x="284.70" y="397.6" width="0.8" height="0.8" fill="#555"/><rect x="286.40" y="395.0" width="0.8" height="0.8" fill="#555"/><rect x="286.40" y="397.6" width="0.8" height="0.8" fill="#555"/><rect x="282.0" y="392.70" width="0.8" height="0.8" fill="#555"/><rect x="284.2" y="392.70" width="0.8" height="0.8" fill="#555"/><rect x="282.0" y="394.50" width="0.8" height="0.8" fill="#555"/><rect x="284.2" y="394.50" width="0.8" height="0.8" fill="#555"/><rect x="282.0" y="398.10" width="0.8" height="0.8" fill="#555"/><rect x="284.2" y="398.10" width="0.8" height="0.8" fill="#555"/><rect x="282.0" y="399.90" width="0.8" height="0.8" fill="#555"/><rect x="284.2" y="399.90" width="0.8" height="0.8" fill="#555"/>
<rect x="282" y="395.2" width="3" height="3.2" fill="#f39a1e"/>
<rect x="0" y="406" width="640" height="0.9" fill="#d2d3d5"/>
<rect x="80.05" y="408" width="0.9" height="9" fill="#7e7e7e"/>
<rect x="192.05" y="408" width="0.9" height="9" fill="#7e7e7e"/>
<rect x="280.05" y="408" width="0.9" height="9" fill="#7e7e7e"/>
<rect x="369.05" y="408" width="0.9" height="9" fill="#7e7e7e"/>
<rect x="403.05" y="408" width="0.9" height="9" fill="#7e7e7e"/>
<rect x="418.05" y="408" width="0.9" height="9" fill="#7e7e7e"/>
<rect x="447.05" y="408" width="0.9" height="9" fill="#7e7e7e"/>
<rect x="504.05" y="408" width="0.9" height="9" fill="#7e7e7e"/>
<rect x="543.05" y="408" width="0.9" height="9" fill="#7e7e7e"/>
<rect x="615.3499999999999" y="408" width="0.9" height="9" fill="#7e7e7e"/>
<rect x="431.8" y="408" width="1.5" height="9" fill="#cbcbcb"/>
<path d="M408 410.5 H410.4 M409.2 410.5 V414.6 M408 414.6 H410.4" stroke="#777" stroke-width="0.7" fill="none"/><path d="M412 414 V414.8 H414.6 V414" stroke="#999" stroke-width="0.6" fill="none"/>
<rect x="422.4" y="409.4" width="6.4" height="5.4" fill="#e0e0e0" stroke="#a0a0a0" stroke-width="0.6"/><rect x="424.8" y="410.2" width="2.6" height="3.8" fill="#8e8e8e"/>
<path d="M511.4 409.6 H513.8 L515.2 411 V414.8 H511.4 Z" fill="#fff" stroke="#e2703a" stroke-width="0.7"/>
<path d="M518.4 409.6 H521.6 V414.8 H518.4 Z M523.2 409.6 H525.6 L526.8 410.8 V414.8 H523.2 Z" fill="#fff" stroke="#b4b4b4" stroke-width="0.6"/>
<path d="M530.4 410 Q532.4 409 534.2 410 V414.8 Q532.4 414 530.4 414.8 Z M534.2 410 Q536 409 538 410 V414.8 Q536 414 534.2 414.8 Z" fill="#fff" stroke="#9a9a9a" stroke-width="0.6"/>
<rect x="548" y="412" width="4" height="0.7" fill="#9a9a9a"/>
<rect x="556" y="412" width="48" height="0.8" fill="#a8a8a8"/>
<rect x="564.2" y="410.8" width="0.7" height="3" fill="#8a8a8a"/>
<circle cx="580" cy="412.4" r="1.9" fill="#f4f4f4" stroke="#9a9a9a" stroke-width="0.7"/>
<path d="M607.6 412.4 H611.4 M609.5 410.5 V414.3" stroke="#9a9a9a" stroke-width="0.7"/>
</svg>
</body></html>
